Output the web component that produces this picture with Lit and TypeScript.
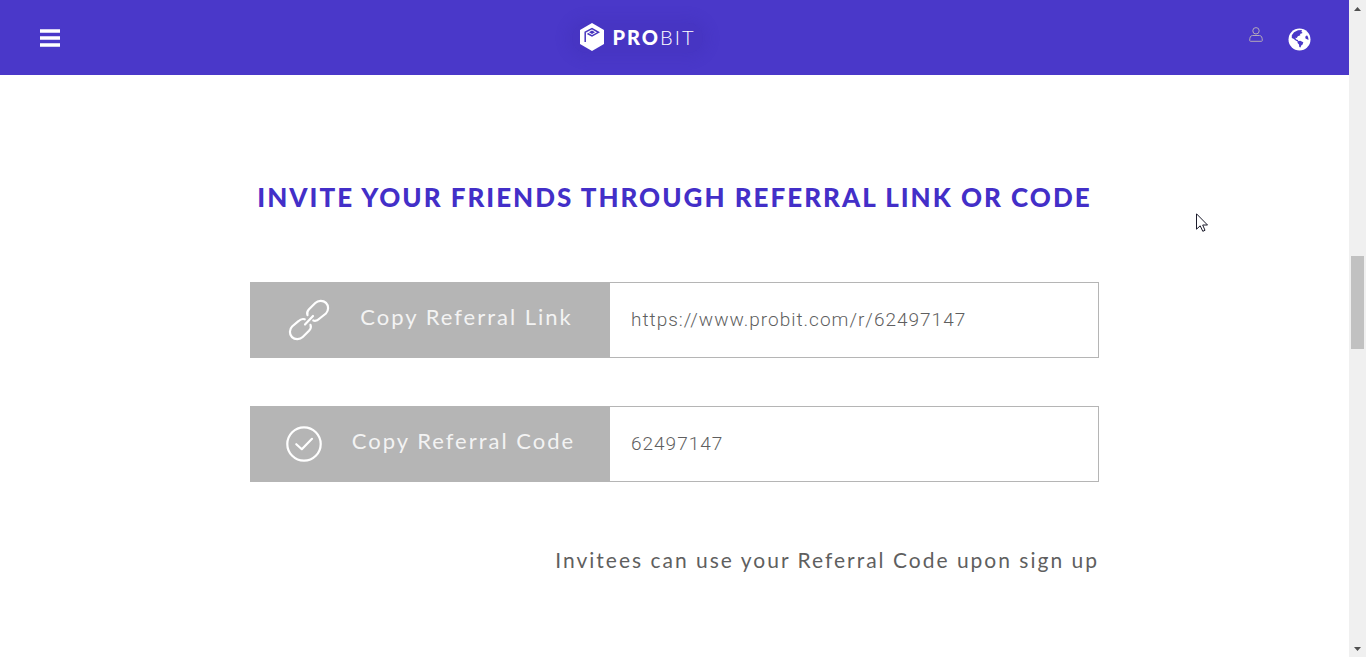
import { LitElement, html, css, svg } from "lit";
import { customElement, property } from "lit/decorators.js";

const linkIcon = svg`
  <svg class="icon-link" viewBox="0 0 42 42" aria-hidden="true" fill="none" stroke="#fff" stroke-width="2.2" stroke-linecap="round">
    <path d="M19.5 16.2C18.6 14 19.4 12 21 10.300L27.300 4C30 1.300 35 .9 38 3.900S40.600 11.800 37.900 14.500L31.600 19.500C29.500 21.600 27.300 22.200 25.300 21.500"/>
    <path d="M22.500 25.800C23.400 28 22.600 30 21 31.700L14.700 38C12 40.700 7 41.100 4 38.100S1.400 30.200 4.100 27.500L10.400 22.200C12.500 20.100 14.700 19.600 16.700 20.300"/>
    <path d="M17 25.500L25 17"/>
  </svg>`;

const checkIcon = svg`
  <svg class="icon-check" viewBox="0 0 36 36" aria-hidden="true" fill="none" stroke="#fff" stroke-width="2.200" stroke-linecap="round" stroke-linejoin="round">
    <circle cx="18" cy="18" r="16.700"/>
    <path d="M10.300 18.200L15.800 23.200L26 12.800"/>
  </svg>`;

@customElement("copy-field")
class CopyField extends LitElement {
  @property() label = "";
  @property() value = "";
  @property() icon = "link";

  static styles = css`
    :host { display: block; }
    .row {
      display: flex;
      box-sizing: border-box;
      border: 1px solid #b5b5b5;
      background: #fff;
    }
    .copy {
      flex: 0 1 359px;
      display: flex;
      align-items: center;
      justify-content: center;
      gap: 30px;
      padding: 16px 0;
      border: 0;
      background: #b5b5b5;
      color: #f3f3f3;
      font: 400 22px/28px Lato, sans-serif;
      letter-spacing: 2px;
      cursor: pointer;
    }
    .caption { padding-bottom: 6px; }
    .icon-link { width: 42px; height: 42px; flex: none; }
    .icon-check { width: 36px; height: 42px; flex: none; }
    .value {
      flex: 1;
      min-width: 0;
      border: 0;
      padding: 0 21px;
      background: none;
      color: #5f5f5f;
      font: 300 19px/28px Roboto, sans-serif;
      letter-spacing: 1px;
      outline: none;
    }
  `;

  private copy() {
    navigator.clipboard?.writeText(this.value);
  }

  render() {
    return html`
      <div class="row">
        <button class="copy" type="button" @click=${this.copy}>
          ${this.icon === "link" ? linkIcon : checkIcon}
          <span class="caption">${this.label}</span>
        </button>
        <input class="value" type="text" readonly aria-label=${this.label} .value=${this.value} />
      </div>
    `;
  }
}

@customElement("app-root")
class AppRoot extends LitElement {
  static styles = css`
    :host {
      display: grid;
      grid-template-columns: minmax(0, 1fr) 17px;
      min-height: 100vh;
      background: #fff;
      font-family: Lato, sans-serif;
    }
    .bar {
      display: grid;
      grid-template-columns: 1fr auto 1fr;
      align-items: center;
      height: 75px;
      padding: 0 38px 0 40px;
      background: #4a38c9;
    }
    .menu, .tool {
      display: block;
      padding: 0;
      border: 0;
      background: none;
      cursor: pointer;
    }
    .menu { justify-self: start; }
    .menu svg, .tool svg, .brand svg { display: block; }
    .brand {
      display: flex;
      align-items: center;
      gap: 9px;
      margin-right: 76px;
      padding: 0 8px 2px;
      color: #fff;
      text-decoration: none;
      font-size: 20px;
      line-height: 28px;
      background: rgba(62, 46, 174, 0.2);
      border-radius: 16px;
      box-shadow: 0 0 12px 6px rgba(62, 46, 174, 0.2);
    }
    .word { letter-spacing: 2px; }
    .pro { font-weight: 900; }
    .bit { font-weight: 300; }
    .tools {
      display: flex;
      align-items: flex-start;
      justify-self: end;
      gap: 25px;
      padding-top: 2px;
    }
    .content {
      box-sizing: border-box;
      max-width: 889px;
      margin: 0 auto;
      padding: 104px 20px 80px;
    }
    .title {
      margin: 0;
      color: #432fc8;
      font-size: 26px;
      line-height: 36px;
      font-weight: 900;
      letter-spacing: 2px;
      text-align: center;
    }
    .fields {
      display: grid;
      gap: 48px;
      padding-top: 67px;
    }
    .note {
      margin: 0;
      padding-top: 64px;
      color: #5f5f5f;
      font-size: 21px;
      line-height: 28px;
      letter-spacing: 2px;
      text-align: right;
    }
    .rail {
      display: grid;
      grid-template-rows: 17px 239fr 93fr 291fr 17px;
      justify-items: center;
      align-items: center;
      background: #f0f0f0;
    }
    .thumb {
      grid-row: 3;
      width: 13px;
      height: 100%;
      background: #c1c1c1;
    }
    .down { grid-row: 5; }
    .pointer {
      position: absolute;
      left: 1196px;
      top: 213px;
      pointer-events: none;
    }
  `;

  render() {
    return html`
      <div>
        <header class="bar">
          <button class="menu" type="button" aria-label="Menu">
            <svg width="20" height="18" viewBox="0 0 20 18" fill="#fff">
              <path d="M0 .3h20v3.500H0zM0 7.300h20v3.500H0zM0 14.300h20v3.500H0z"/>
            </svg>
          </button>
          <a class="brand" href="#">
            <svg width="24" height="28" viewBox="0 0 24 28" aria-hidden="true">
              <path d="M12 0L24 7V21L12 28L0 21V7z" fill="#fff"/>
              <path d="M5.200 19V9.200L12 5.500L18.500 9.300L12 13L7.500 10.500" fill="none" stroke="#4634be" stroke-width="1.500"/>
              <path d="M12 7.600L15 9.300L12 11L9 9.300z" fill="#4634be"/>
            </svg>
            <span class="word"><span class="pro">PRO</span><span class="bit">BIT</span></span>
          </a>
          <div class="tools">
            <button class="tool" type="button" aria-label="Account">
              <svg width="14" height="15" viewBox="0 0 14 15" fill="none" stroke="#b4a9b8" stroke-width="1">
                <circle cx="7" cy="3.800" r="3.200"/>
                <path d="M3.500 8.500H10.500C12.500 8.500 13.300 10.500 13.300 13.500Q13.300 14.300 12.500 14.300H1.500Q.7 14.300 .7 13.500C.7 10.500 1.500 8.500 3.500 8.500z"/>
              </svg>
            </button>
            <button class="tool" type="button" aria-label="Language">
              <svg width="23" height="24" viewBox="0 0 23 24">
                <circle cx="11.500" cy="12.500" r="11" fill="#fff"/>
                <g fill="#4a38c9">
                  <path d="M3.800 8.200L6 5.200L10 3.200L14 3.100L13.400 4.600L14.600 5.900L12 7L12.400 8.200L9.800 9.200L8.800 11L7.300 10.800L8.200 12.600L10 13L10.400 14.700L8 13.700L5.500 11.700L3.800 11z"/>
                  <path d="M9.500 14.300L12.200 13.700L15.300 15.200L14.600 17.500L13.200 18.500L12.500 20.500L11.300 20L11 17.400L9.600 16z"/>
                  <path d="M19 8.200L17.200 9.700L17.500 11.500L19.500 12.500L20.600 12.800Q20.700 10.200 19 8.200z"/>
                </g>
              </svg>
            </button>
          </div>
        </header>
        <main class="content">
          <h1 class="title">INVITE YOUR FRIENDS THROUGH REFERRAL LINK OR CODE</h1>
          <div class="fields">
            <copy-field icon="link" label="Copy Referral Link" value="https://www.probit.com/r/62497147"></copy-field>
            <copy-field icon="check" label="Copy Referral Code" value="62497147"></copy-field>
          </div>
          <p class="note">Invitees can use your Referral Code upon sign up</p>
        </main>
      </div>
      <div class="rail" aria-hidden="true">
        <svg width="7" height="4" viewBox="0 0 7 4"><path d="M0 4L3.500 0L7 4z" fill="#505050"/></svg>
        <div class="thumb"></div>
        <svg class="down" width="7" height="4" viewBox="0 0 7 4"><path d="M0 0H7L3.500 4z" fill="#505050"/></svg>
      </div>
      <svg class="pointer" width="13" height="20" viewBox="0 0 13 20" aria-hidden="true">
        <path d="M.5 .8V16.200L4.200 12.800L6.800 18.300L9 17.300L6.700 12H11.500z" fill="#fff" stroke="#1b1b2b"/>
      </svg>
    `;
  }
}
